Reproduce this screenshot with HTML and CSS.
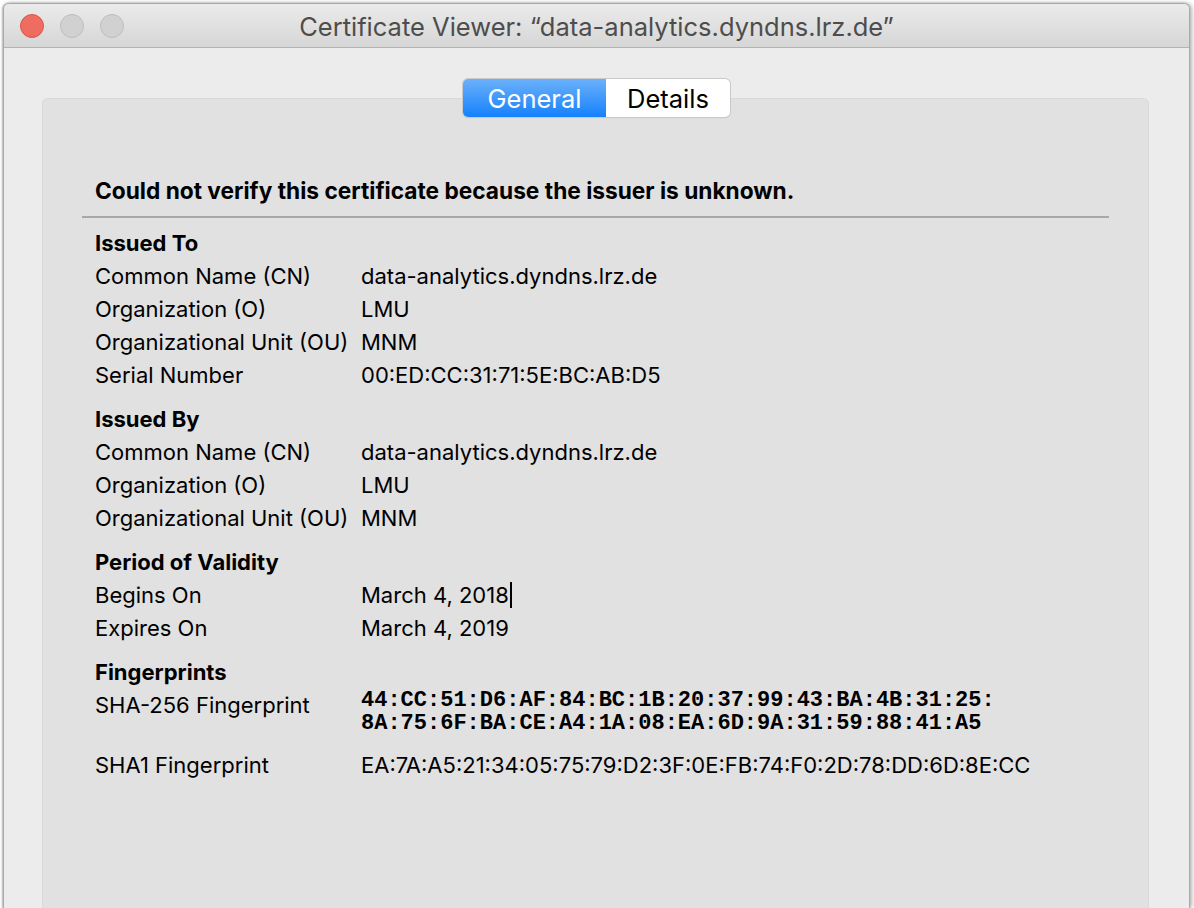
FILE: index.html
```html
<!DOCTYPE html>
<html>
<head>
<meta charset="utf-8">
<link rel="stylesheet" href="styles.css">
</head>
<body>
<div class="window">
  <div class="titlebar">
    <div class="lights">
      <span class="light red"></span>
      <span class="light gray"></span>
      <span class="light gray"></span>
    </div>
    <div class="title">Certificate Viewer: “data-analytics.dyndns.lrz.de”</div>
  </div>
  <div class="content">
    <div class="segmented">
      <span class="seg active">General</span>
      <span class="seg">Details</span>
    </div>
    <div class="panel">
      <div class="warning">Could not verify this certificate because the issuer is unknown.</div>
      <div class="sep"></div>
      <div class="section first">
        <div class="sec-title">Issued To</div>
        <div class="row"><span class="lbl">Common Name (CN)</span><span class="val">data-analytics.dyndns.lrz.de</span></div>
        <div class="row"><span class="lbl">Organization (O)</span><span class="val">LMU</span></div>
        <div class="row"><span class="lbl">Organizational Unit (OU)</span><span class="val">MNM</span></div>
        <div class="row"><span class="lbl">Serial Number</span><span class="val">00:ED:CC:31:71:5E:BC:AB:D5</span></div>
      </div>
      <div class="section">
        <div class="sec-title">Issued By</div>
        <div class="row"><span class="lbl">Common Name (CN)</span><span class="val">data-analytics.dyndns.lrz.de</span></div>
        <div class="row"><span class="lbl">Organization (O)</span><span class="val">LMU</span></div>
        <div class="row"><span class="lbl">Organizational Unit (OU)</span><span class="val">MNM</span></div>
      </div>
      <div class="section">
        <div class="sec-title">Period of Validity</div>
        <div class="row"><span class="lbl">Begins On</span><span class="val">March 4, 2018<span class="caret"></span></span></div>
        <div class="row"><span class="lbl">Expires On</span><span class="val">March 4, 2019</span></div>
      </div>
      <div class="section">
        <div class="sec-title">Fingerprints</div>
        <div class="row"><span class="lbl">SHA-256 Fingerprint</span><span class="val mono">44:CC:51:D6:AF:84:BC:1B:20:37:99:43:BA:4B:31:25:<br>8A:75:6F:BA:CE:A4:1A:08:EA:6D:9A:31:59:88:41:A5</span></div>
        <div class="row sha1"><span class="lbl">SHA1 Fingerprint</span><span class="val">EA:7A:A5:21:34:05:75:79:D2:3F:0E:FB:74:F0:2D:78:DD:6D:8E:CC</span></div>
      </div>
    </div>
  </div>
</div>
</body>
</html>
```
FILE: styles.css
```css
html, body {
  margin: 0;
  padding: 0;
  height: 100%;
  background: #ffffff;
  overflow: hidden;
}
body {
  font-family: Inter, "Liberation Sans", sans-serif;
  color: #000;
}
.window {
  margin: 3px 4px 0 3px;
  height: calc(100% - 3px);
  box-sizing: border-box;
  background: #ececec;
  border: 1px solid #a9a9a9;
  border-bottom: none;
  border-radius: 6px 6px 0 0;
  box-shadow: -1px 0 2px rgba(0,0,0,0.25), 2px 0 4px rgba(0,0,0,0.3);
  display: flex;
  flex-direction: column;
}
.titlebar {
  height: 43px;
  border-radius: 5px 5px 0 0;
  background: linear-gradient(#ebebeb, #d6d6d6);
  border-bottom: 1px solid #b3b3b3;
  display: flex;
  align-items: center;
  position: relative;
}
.lights {
  display: flex;
  gap: 16px;
  padding-left: 16px;
  padding-top: 0;
}
.light {
  width: 24px;
  height: 24px;
  border-radius: 50%;
  box-sizing: border-box;
}
.light.red {
  background: #ef6c61;
  border: 1px solid #d8564c;
}
.light.gray {
  background: #d1d1d1;
  border: 1px solid #bdbdbd;
}
.title {
  position: absolute;
  left: 0;
  right: 0;
  top: 0;
  line-height: 46px;
  text-align: center;
  font-size: 25.5px;
  color: #4d4d4d;
  pointer-events: none;
}
.content {
  flex: 1;
  display: flex;
  flex-direction: column;
  padding: 31px 40px 0 38px;
}
.segmented {
  align-self: center;
  display: flex;
  height: 38px;
  border-radius: 5px;
  box-shadow: 0 0 0 1px #c9c9c9, 0 1px 1px rgba(0,0,0,0.15);
  background: #fff;
  position: relative;
  z-index: 1;
  margin-left: 2px;
  overflow: hidden;
}
.seg {
  display: flex;
  align-items: center;
  justify-content: center;
  font-size: 25.5px;
  color: #000;
}
.seg.active {
  width: 143px;
  background: linear-gradient(#6bb1fb, #1581fb);
  color: #fff;
}
.seg:not(.active) {
  width: 124px;
}
.panel {
  flex: 1;
  margin-top: -19px;
  background: #e1e1e1;
  border: 1px solid #d9d9d9;
  border-bottom: none;
  border-radius: 6px 6px 0 0;
  padding: 75px 39px 0 39px;
}
.warning {
  font-weight: 700;
  font-size: 22.7px;
  line-height: 33px;
  padding-left: 13px;
}
.sep {
  height: 2px;
  background: #a8a8a8;
  margin-top: 9px;
}
.section {
  padding-left: 13px;
  margin-top: 11px;
}
.section.first {
  margin-top: 9px;
}
.sec-title {
  font-weight: 700;
  font-size: 22px;
  line-height: 33px;
}
.row {
  display: flex;
  font-size: 22px;
  line-height: 33px;
}
.lbl {
  width: 266px;
  flex: none;
}
.val {
  position: relative;
}
.mono {
  font-family: "Courier New", "Liberation Mono", monospace;
  font-weight: 700;
  font-size: 22px;
  line-height: 23px;
  padding-top: 0;
}
.row.sha1 {
  margin-top: 14px;
}
.caret {
  display: inline-block;
  width: 2px;
  height: 26px;
  background: #000;
  vertical-align: -5px;
  margin-left: 1px;
}
```
